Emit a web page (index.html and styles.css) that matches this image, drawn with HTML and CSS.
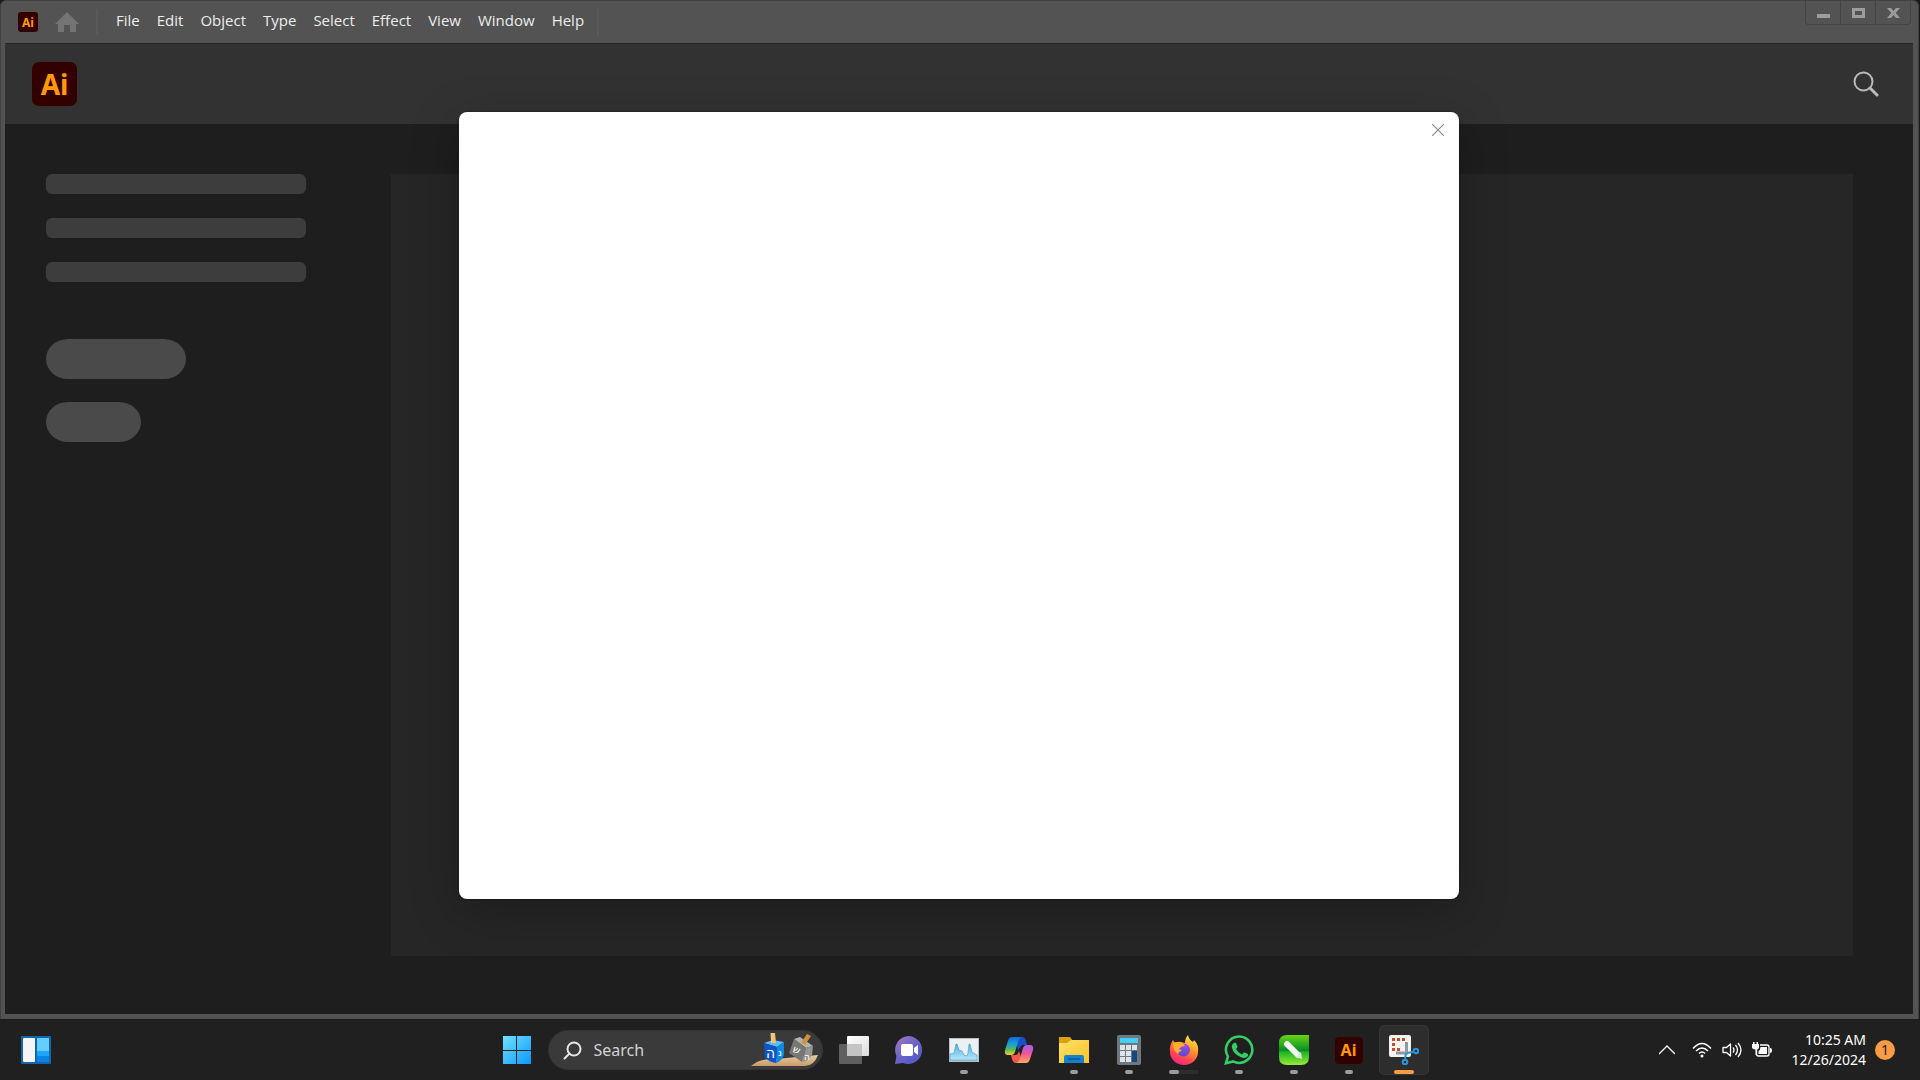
FILE: index.html
```html
<!DOCTYPE html>
<html lang="en">
<head>
<meta charset="utf-8">
<title>Adobe Illustrator</title>
<link rel="stylesheet" href="styles.css">
</head>
<body>
<main class="window">
  <header class="titlebar">
    <span class="ai-logo ai-logo-small">Ai</span>
    <button class="home" aria-label="Home">
      <svg width="24" height="20" viewBox="0 0 24 20"><path fill="#747474" d="M12 0 24 12H21V20H15V13H9V20H3V12H0Z"/></svg>
    </button>
    <nav class="menu">
      <button>File</button><button>Edit</button><button>Object</button><button>Type</button><button>Select</button><button>Effect</button><button>View</button><button>Window</button><button>Help</button>
    </nav>
    <div class="window-controls">
      <button aria-label="Minimize"><svg width="13" height="10"><path fill="#9c9c9c" d="M0 6H13V10H0Z"/></svg></button>
      <button aria-label="Maximize"><svg width="13" height="10"><path fill="#9c9c9c" fill-rule="evenodd" d="M0 0H13V10H0ZM3 3V7H10V3Z"/></svg></button>
      <button aria-label="Close"><svg width="13" height="10"><path fill="#9c9c9c" d="M0 0H4L6.5 3 9 0H13L8.700 5 13 10H9L6.500 7.100 4 10H0L4.300 5Z"/></svg></button>
    </div>
  </header>
  <div class="client">
    <div class="appbar">
      <span class="ai-logo ai-logo-large">Ai</span>
      <button class="app-search" aria-label="Search">
        <svg width="26" height="26" viewBox="0 0 26 26" fill="none" stroke="#bababa" stroke-width="2"><circle cx="10.500" cy="10.500" r="9"/><path stroke-width="3" stroke-linecap="round" d="m17 17 7 7"/></svg>
      </button>
    </div>
    <div class="workspace">
      <aside class="skeleton">
        <div class="bar"></div><div class="bar"></div><div class="bar"></div>
        <div class="pill pill-wide"></div><div class="pill"></div>
      </aside>
      <section class="panel"></section>
    </div>
    <div class="dialog" role="dialog" aria-label="Dialog">
      <button class="dialog-close" aria-label="Close dialog">
        <svg width="12" height="12" viewBox="0 0 12 12" stroke="#8c8c8c" stroke-width="1.200"><path d="m0 0 12 12M12 0 0 12"/></svg>
      </button>
    </div>
  </div>
</main>

<footer class="taskbar">
  <div class="taskbar-left">
    <button class="task" aria-label="Widgets">
      <svg width="30" height="28" viewBox="0 0 30 28"><rect width="30" height="28" rx="1" fill="#1266a9"/><rect x="2" y="2" width="12" height="24" rx="1" fill="#f5f5f7"/><path fill="#61d0ff" d="M16 2h12v13H16z"/><path fill="#20a5fb" d="M16 15h12v5H16z"/><path fill="#0784e8" d="M16 20h12v6H16z"/></svg>
    </button>
  </div>
  <div class="taskbar-center">
    <button class="task" aria-label="Start">
      <svg width="30" height="30" viewBox="0 0 30 30"><defs><linearGradient id="win" gradientUnits="userSpaceOnUse" x2="30" y2="30"><stop stop-color="#72e5ff"/><stop offset="1" stop-color="#0994ff"/></linearGradient></defs><path fill="url(#win)" d="M1 1h13v14H1zM15 1h14v14H15zM1 16h13v13H1zM15 16h14v13H15z"/></svg>
    </button>
    <label class="search">
      <svg class="search-icon" width="19" height="19" viewBox="0 0 19 19" fill="none" stroke="#e6e6e6" stroke-width="2"><circle cx="11" cy="8" r="6.500"/><path stroke-linecap="round" d="m6.500 12.500-5 5"/></svg>
      <input type="text" placeholder="Search" aria-label="Search">
      <svg class="search-art" width="68" height="34" viewBox="0 0 68 34">
        <defs><linearGradient id="sand" x2="0" y2="1"><stop stop-color="#e9cda6"/><stop offset="1" stop-color="#c89a67"/></linearGradient><linearGradient id="stick"><stop stop-color="#f3c77c"/><stop offset="1" stop-color="#c98a35"/></linearGradient></defs>
        <path fill="url(#sand)" d="M0 33Q9 25 25 26L67 22Q63 33 54 33Z"/>
        <path fill="#5bbcf2" d="m13 10 9-3 11 2-7 5z"/><path fill="#0d55c9" d="m13 10 13 4-1 16q-8-1-11-6z"/><path fill="#0b8ae6" d="m26 14 7-5v13q-2 6-8 8z"/>
        <path fill="#b4b4af" d="m43 6 6-2 13 9-7 2z"/><path fill="#777873" d="m43 6 12 9-4 14-13-9z"/><path fill="#949590" d="m55 15 7-2-1 9q-3 6-10 7z"/>
        <path fill="url(#stick)" d="M19.500 0h4.500l1 10h-5zM56 1l4 2-6 9-4-2z"/>
        <g fill="#fff" font-family="DejaVu Sans"><text x="15" y="25" font-size="14">ה</text><text x="27" y="23" font-size="10">נ</text><text x="42" y="20" font-size="10" transform="rotate(24 45 17)">ש</text><text x="53" y="27" font-size="9">ה</text></g>
      </svg>
    </label>
    <button class="task" aria-label="Task view">
      <svg width="30" height="30" viewBox="0 0 30 30"><defs><linearGradient id="tv" x2="1" y2="1"><stop stop-color="#fff"/><stop offset="1" stop-color="#dcdcdc"/></linearGradient></defs><rect x="8" y="1" width="22" height="20" rx="1" fill="url(#tv)"/><rect y="9" width="23" height="20" rx="1" fill="#747474" fill-opacity=".75"/><path fill="#c4c4c4" d="M8 9h15v12H8z"/></svg>
    </button>
    <button class="task" aria-label="Chat">
      <svg width="30" height="30" viewBox="0 0 30 30"><defs><linearGradient id="chat" x2="1" y2="1"><stop stop-color="#a97bc0"/><stop offset=".5" stop-color="#6764c8"/><stop offset="1" stop-color="#4f55c9"/></linearGradient></defs><path fill="url(#chat)" d="M15 1A14 14 0 1 1 9 28L1 29 2.500 21A14 14 0 0 1 15 1Z"/><rect x="7" y="9" width="12" height="12" rx="2" fill="#fff"/><path fill="#fff" d="m20 13 4-3v10l-4-3z"/></svg>
    </button>
    <button class="task running" aria-label="Task Manager">
      <svg width="30" height="24" viewBox="0 0 30 24"><defs><linearGradient id="tm" x2="0" y2="1"><stop stop-color="#4aafe0"/><stop offset="1" stop-color="#b9e7fb"/></linearGradient></defs><path fill="#b4bec6" d="M0 0h30v24H0z"/><path fill="#edf0f3" d="M1 1h28v21H1z"/><path fill="url(#tm)" stroke="#4ba6d2" stroke-width=".7" d="M1 22v-6l4-1 2-9 1 0 2 6 3 1 2 4 3 1 1-3 1-9h1l2 8 3 2 2 1v5z"/></svg>
    </button>
    <button class="task" aria-label="Copilot">
      <svg width="30" height="30" viewBox="0 0 30 30"><defs><linearGradient id="cp1" x2="0" y2="1"><stop stop-color="#1668df"/><stop offset=".4" stop-color="#15a2cf"/><stop offset=".7" stop-color="#57b959"/><stop offset="1" stop-color="#f4d12d"/></linearGradient><linearGradient id="cp2" x2="0" y2="1"><stop stop-color="#a65bf0"/><stop offset=".5" stop-color="#ef5797"/><stop offset="1" stop-color="#ffab5b"/></linearGradient></defs><path fill="#1850cc" d="M11 2h7q3 0 4 4l1 4h-5l-4 5z"/><path fill="url(#cp1)" d="M8 2h10q-3 1-4 5l-3 10q-1 3-4 3H4q-4 0-3-5l3-9q1-4 4-4Z"/><path fill="#ee5a45" d="M19 28h-7q-3 0-4-4l-1-4h4q3 0 4-4z"/><path fill="url(#cp2)" d="M22 28H12q3-1 4-5l3-10q1-3 4-3h3q4 0 3 5l-3 9q-1 4-4 4Z"/></svg>
    </button>
    <button class="task running" aria-label="File Explorer">
      <svg width="30" height="28" viewBox="0 0 30 28"><defs><linearGradient id="fe" x2="1" y2="1"><stop stop-color="#ffe06b"/><stop offset="1" stop-color="#ffc425"/></linearGradient></defs><path fill="#dda110" d="M0 1h11l3 4v7H0z"/><path fill="url(#fe)" d="M12 4h18v23H0V7h8z"/><path fill="#1681cb" d="M5 27v-6q0-2 2-2h16q2 0 2 2v6z"/><path stroke="#075796" stroke-width="1.500" d="M9 23h12"/></svg>
    </button>
    <button class="task running" aria-label="Calculator">
      <svg width="24" height="30" viewBox="0 0 24 30"><rect width="24" height="30" rx="2" fill="#70777e"/><path fill="#43cef7" d="M3 3h18v5H3z"/><path fill="#dce4eb" d="M3 10h5v5H3zM9 10h5v5H9zM15 10h5v5h-5zM3 16h5v5H3zM9 16h5v5H9zM3 22h5v5H3zM9 22h5v5H9z"/><path fill="#144980" d="M15 16h5v11h-5z"/></svg>
    </button>
    <button class="task running multiple" aria-label="Firefox">
      <svg width="30" height="30" viewBox="0 0 30 30"><defs><linearGradient id="ff" x1=".8" x2=".3" y2="1"><stop stop-color="#fff148"/><stop offset=".4" stop-color="#ff9b27"/><stop offset=".75" stop-color="#ff4550"/><stop offset="1" stop-color="#e7258b"/></linearGradient><linearGradient id="ffp" x2="0" y2="1"><stop stop-color="#a84be0"/><stop offset="1" stop-color="#574cd2"/></linearGradient></defs><path fill="url(#ff)" d="M4 5 6 8Q9 6 12 7L16 8Q16 3 19 0 20 5 24 7L25 5Q30 10 29 17A14 13 0 0 1 1 17Q0 11 4 5Z"/><circle cx="14.500" cy="15" r="6.500" fill="url(#ffp)"/><path fill="#ffad2b" d="M4 8Q8 6 13 8q2 1 3 3-4 0-6 3 2 1 3 2-3 0-4 3-5-3-5-11Z"/></svg>
    </button>
    <button class="task running" aria-label="WhatsApp">
      <svg width="30" height="30" viewBox="0 0 30 30"><path fill="none" stroke="#35cd65" stroke-width="2.600" d="M15.300 1.500A13.200 13.200 0 1 1 9 26.400L2 28.200 3.900 21.500A13.200 13.200 0 0 1 15.300 1.500Z"/><path fill="#35cd65" d="M10 8q1-1 2 0l1.500 3.500q0 1-1.500 2.500 2 4 6 5.500l2-2q1-.5 4 1.500.5 1-.5 2.500-2.500 2.500-7 .5-7-3-8.500-9Q7 10 10 8Z"/></svg>
    </button>
    <button class="task running" aria-label="CorelDRAW">
      <svg width="30" height="30" viewBox="0 0 30 30"><defs><linearGradient id="corel" x2="0" y2="1"><stop stop-color="#66d514"/><stop offset=".52" stop-color="#078d24"/><stop offset=".56" stop-color="#16b624"/><stop offset="1" stop-color="#9bea35"/></linearGradient></defs><path fill="url(#corel)" d="M8 0h22v22q0 8-8 8H8q-8 0-8-8V8q0-8 8-8Z"/><path stroke="#f2f4f1" stroke-width="6" stroke-linecap="round" d="m8 9 11 11"/><path fill="#dfe5df" d="m17 22 5-5 1 7z"/></svg>
    </button>
    <button class="task running" aria-label="Illustrator"><span class="ai-logo ai-logo-task">Ai</span></button>
    <button class="task running active" aria-label="Snipping Tool">
      <svg width="30" height="30" viewBox="0 0 30 30"><rect width="22" height="22" rx="2" fill="#f2f3f5"/><path fill="#c54e1c" d="M3 3h3v3H3zM8 3h3v3H8zM13 3h3v3h-3zM3 8h3v3H3zM3 13h3v3H3zM8 13h3v3H8z"/><path fill="none" stroke="#92989e" stroke-width="3" d="M17.500 7v11H7"/><g fill="none" stroke="#2798d8" stroke-width="2"><path d="m17 18-1 6M18 18l6-1"/><circle cx="16" cy="27" r="2.300"/><circle cx="27" cy="16" r="2.300"/></g></svg>
    </button>
  </div>
  <div class="tray">
    <button class="tray-button chevron" aria-label="Show hidden icons"><svg width="16" height="10" viewBox="0 0 16 10" fill="none" stroke="#f2f2f2" stroke-width="1.400"><path d="m0 9 8-8 8 8"/></svg></button>
    <button class="tray-button status" aria-label="Network, volume and battery">
      <svg width="20" height="16" viewBox="0 0 20 16" fill="none" stroke="#fff" stroke-width="1.500"><path d="M1 6.500Q10-3.500 19 6.500M4 9q6-6 12 0M7 11.500q3-3 6 0"/><circle cx="10" cy="14" r="1.500" fill="#fff" stroke="none"/></svg>
      <svg width="20" height="16" viewBox="0 0 20 16" fill="none" stroke="#fff" stroke-width="1.300"><path stroke-linejoin="round" d="M1 5.500h3.500L8.500 2v12l-4-3.500H1zM11 5.500q2 2.500 0 5M13.500 3q4 5 0 10M16 1q6 7 0 14"/></svg>
      <svg width="20" height="16" viewBox="0 0 20 16"><path fill="none" stroke="#fff" stroke-width="1.300" d="M8 3h7q2 0 2 2v7q0 2-2 2H6.500q-2 0-2-2V7"/><path fill="#fff" d="M1 0h1.500v2h2V0H6v2h1v3q0 2-2 2.500V11q0 2-1.500 2V7.500Q0 7 0 5V2h1zM8.500 5H15v7H6.500V9q2-1 2-4ZM18 6q2 0 2 2v1q0 2-2 2z"/></svg>
    </button>
    <button class="clock"><span>10:25 AM</span><span>12/26/2024</span></button>
    <button class="badge" aria-label="1 notification">1</button>
  </div>
</footer>
</body>
</html>
```
FILE: styles.css
```css
* {
  box-sizing: border-box;
}

body {
  margin: 0;
  min-height: 100vh;
  display: flex;
  flex-direction: column;
  background: #1a1a1a;
  color: #fff;
  font-family: "Noto Sans", sans-serif;
}

button {
  margin: 0;
  padding: 0;
  border: 0;
  background: none;
  color: inherit;
  font: inherit;
}

svg {
  display: block;
  flex: none;
}

/* Application window */
.window {
  flex: 1;
  display: flex;
  flex-direction: column;
  margin: 0 1px 1px 0;
  padding: 0 5px 5px 4px;
  border: 1px solid #414141;
  border-bottom: 0;
  border-radius: 6px 6px 0 0;
  background: #535353;
}

.titlebar {
  display: flex;
  align-items: center;
  height: 42px;
  padding-left: 13px;
}

.ai-logo {
  display: flex;
  align-items: center;
  justify-content: center;
  background: #330000;
  color: #ff9a00;
  font-weight: 700;
}

.ai-logo-small {
  width: 20px;
  height: 20px;
  border-radius: 3px;
  font-size: 12px;
}

.ai-logo-large {
  width: 45px;
  height: 44px;
  border-radius: 7px;
  font-size: 28px;
}

.ai-logo-task {
  width: 28px;
  height: 27px;
  border-radius: 4px;
  font-size: 16px;
}

.home {
  margin-left: 17px;
}

.menu {
  display: flex;
  align-items: center;
  gap: 17px;
  height: 26px;
  margin-left: 17px;
  padding: 0 13px 4px 18px;
  border-left: 2px solid #5a5a5a;
  border-right: 2px solid #5a5a5a;
  color: #ececec;
  font-family: "Open Sans", "Noto Sans", sans-serif;
  font-size: 15px;
  line-height: 20px;
}

.window-controls {
  display: flex;
  align-self: flex-start;
  margin: 0 2px 0 auto;
  border: 1px solid #434343;
  border-top: 0;
  border-radius: 0 0 4px 4px;
}

.window-controls button {
  display: flex;
  align-items: center;
  justify-content: center;
  width: 34px;
  height: 23px;
}

.window-controls button + button {
  width: 35px;
  border-left: 1px solid #434343;
}

.client {
  position: relative;
  flex: 1;
  display: flex;
  flex-direction: column;
  background: #1e1e1e;
}

.appbar {
  display: flex;
  align-items: center;
  justify-content: space-between;
  height: 81px;
  padding: 0 34px 0 27px;
  border-top: 1px solid #252525;
  background: #323232;
}

.workspace {
  flex: 1;
  display: flex;
  gap: 85px;
  padding: 50px 60px 58px 41px;
}

.skeleton {
  width: 260px;
}

.bar {
  height: 20px;
  margin-bottom: 24px;
  border-radius: 6px;
  background: #3d3d3d;
}

.pill {
  width: 95px;
  height: 40px;
  margin-top: 23px;
  border-radius: 22px / 20px;
  background: #4a4a4a;
}

.pill-wide {
  width: 140px;
  margin-top: 57px;
}

.panel {
  flex: 1;
  background: #262626;
}

/* Modal centred over the workspace */
.dialog {
  position: absolute;
  inset: 69px 0 115px;
  display: flex;
  align-items: flex-start;
  justify-content: flex-end;
  width: 1000px;
  max-width: 100%;
  margin: 0 auto;
  padding: 12px 15px;
  border-radius: 8px;
  background: #fff;
  box-shadow: 0 12px 48px rgba(0, 0, 0, 0.25), 0 0 2px rgba(0, 0, 0, 0.5);
}

/* Taskbar */
.taskbar {
  display: grid;
  grid-template-columns: 1fr auto 1fr;
  align-items: center;
  height: 60px;
  background: #202020;
}

.taskbar-left {
  padding-left: 11px;
}

.taskbar-center {
  display: flex;
  align-items: center;
  gap: 5px;
}

.task {
  position: relative;
  display: flex;
  align-items: center;
  justify-content: center;
  width: 50px;
  height: 50px;
  border-radius: 5px;
}

.running::after {
  content: "";
  position: absolute;
  bottom: 1px;
  left: 21px;
  width: 8px;
  height: 4px;
  border-radius: 2px;
  background: #9c9c9c;
}

.multiple::before {
  content: "";
  position: absolute;
  bottom: 1px;
  left: 10px;
  width: 30px;
  height: 4px;
  border-radius: 2px;
  background: #2d2d2d;
}

.multiple::after {
  left: 10px;
  width: 10px;
}

.active {
  border: 1px solid #363636;
  background: #2d2d2d;
}

.active::after {
  bottom: 0;
  left: 14px;
  width: 20px;
  background: #f99a44;
}

.search {
  display: flex;
  align-items: center;
  width: 275px;
  height: 40px;
  margin: 0 1px;
  padding: 0 3px 0 14px;
  border: 1px solid #333;
  border-radius: 20px;
  background: #3a3a3a;
}

.search input {
  flex: 1;
  min-width: 0;
  margin-left: 12px;
  padding: 0;
  border: 0;
  outline: 0;
  background: none;
  color: #fff;
  font: inherit;
  font-size: 16px;
}

.search input::placeholder {
  color: #d2d2d2;
  opacity: 1;
}

.tray {
  display: flex;
  align-items: center;
  justify-content: flex-end;
  padding-right: 25px;
}

.status {
  display: flex;
  gap: 10px;
  margin: 0 20px 0 17px;
}

.clock {
  display: flex;
  flex-direction: column;
  font-size: 14px;
  line-height: 20px;
  text-align: right;
}

.badge {
  width: 20px;
  height: 20px;
  margin-left: 9px;
  border-radius: 50%;
  background: #f99a44;
  color: #202020;
  font-size: 14px;
  line-height: 20px;
}
```
